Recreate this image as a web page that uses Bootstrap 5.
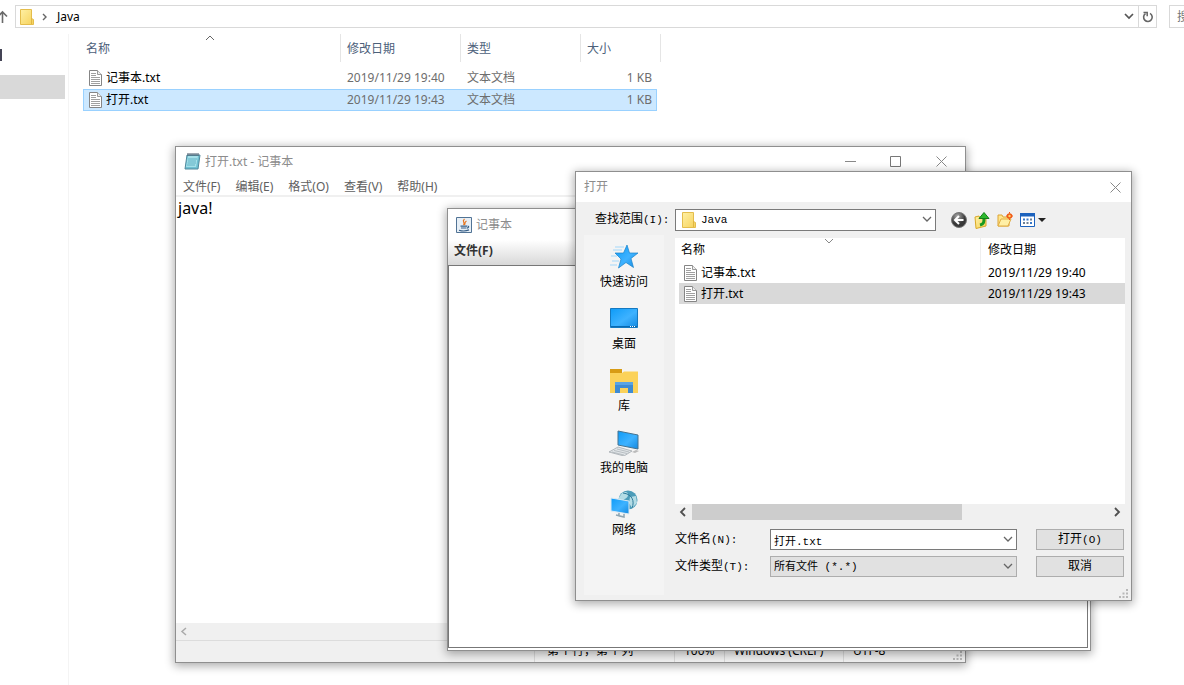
<!DOCTYPE html>
<html lang="zh-CN">
<head>
<meta charset="utf-8">
<meta name="viewport" content="width=device-width, initial-scale=1">
<title>Java</title>
<link href="https://cdn.jsdelivr.net/npm/bootstrap@5.3.0/dist/css/bootstrap.min.css" rel="stylesheet">
<style>
:root{--ui:"Noto Sans","Noto Sans CJK SC",sans-serif;--song:"Liberation Mono","Noto Sans CJK SC",monospace}
body{font:12px/20px var(--ui);color:#000;background:#fff}
button,input,select{font:inherit;color:inherit}
svg{display:block;flex:none}
/* explorer */
.address{height:23px;border:1px solid #d9d9d9}
.address .reload{width:18px;border-left:1px solid #d9d9d9}
.address .crumb{margin-left:9px}
.plain-btn{border:0;background:none;padding:0;display:flex;align-items:center;justify-content:center}
.search-box{width:15px;height:23px;border:1px solid #d9d9d9;border-right:0;padding:0 0 0 7px;border-radius:0;margin-left:12px}
.side-tree{width:69px;border-right:1px solid #f4f4f4}
.side-tree .tree-head{height:12px;width:2px;background:#445;margin-top:15px}
.side-tree .tree-sel{height:24px;width:65px;background:#d9d9d9;margin-top:14px}
.grid-files{border-collapse:separate;border-spacing:0;table-layout:fixed}
.grid-files th,.grid-files td{padding:0;font-weight:400;white-space:nowrap}
.explorer-grid{width:578px;margin-left:14px}
.explorer-grid th{height:28px;color:#4c607a;border-right:1px solid #e5e5e5;padding:2px 0 0 6px}
.explorer-grid th:first-child{padding-left:3px}
.explorer-grid th:nth-child(4){border-right:0}
.explorer-grid th:last-child{padding:0}
.explorer-grid td{height:22px;padding-left:6px;color:#6d6d6d;border-top:1px solid transparent;border-bottom:1px solid transparent}
.explorer-grid td:first-child{color:#000;padding-left:5px;border-left:1px solid transparent}
.explorer-grid td:nth-child(4){border-right:1px solid transparent;padding-right:4px}
.explorer-grid .picked td{background:#cce8ff;border-color:#99d1ff;line-height:18px}
.explorer-grid tbody tr:first-child td{height:27px;padding-top:5px}
.explorer-grid tbody tr:first-child td{line-height:20px}
.sort-mark{position:absolute;left:122px;top:-5px}
.list-pane .sort-mark{left:145px}
/* windows on the desktop */
.win{position:absolute;display:flex;flex-direction:column;border:1px solid #8f8f8f;background:#fff;box-shadow:0 2px 9px 1px rgba(0,0,0,.33)}
.win-title{color:#8c8c8c}
.notepad{left:175px;top:146px;width:791px;height:517px}
.notepad .win-title{height:29px}
.notepad .menus{height:21px;border-bottom:2px solid #f0f0f0;color:#606060;gap:15px;padding-left:7px;line-height:22px}
.notepad a,.javawin a{color:inherit;text-decoration:none}
.notepad textarea{border:0;resize:none;outline:0;font:16px/22px var(--ui);padding:0 2px;min-height:0}
.track{height:17px;background:#f0f0f0}
.status{height:22px;background:#f0f0f0;border-top:1px solid #dcdcdc}
.status span{border-left:1px solid #d8d8d8;padding-left:9px}
.status .s1{width:140px;padding-left:12px}.status .s2{width:50px}.status .s3{width:119px}.status .s4{width:122px}
.javawin{left:447px;top:208px;width:644px;height:443px}
.javawin .win-title{height:31px}
.javawin .menus{height:25px;background:linear-gradient(#fff,#d8d8d8);font-weight:700;color:#333;padding:1px 6px}
.javawin .pane{border:1px solid #777;margin-right:2px;margin-bottom:2px}
.dialog{left:575px;top:171px;width:557px;height:430px;background:#f0f0f0}
.dialog .win-title{height:30px;background:#fff}
.song{font-size:12px;font-family:var(--song)}
.song i{font-style:normal;font-size:11px}
.look-row{height:36px}
.look-row label{width:80px;margin-left:19px}
.look-row .box-wrap{width:261px}
.look-row .tools{margin-left:15px;gap:7px}
.box-wrap{position:relative}
.combo{appearance:none;border:1px solid #7a7a7a;border-radius:0;background:#fff;width:100%;height:21px;padding:0 20px 0 3px;font:11px/18px var(--song);outline:0;display:block}
.combo.grey{background:#e1e1e1;border-color:#adadad}
.look-row .combo{padding-left:25px;height:22px}
.box-wrap svg.arr{position:absolute;right:4px;top:7px;pointer-events:none}
.box-wrap svg.fold{position:absolute;left:7px;top:3px;pointer-events:none}
.places{flex:none;width:80px;background:#f4f4f4;margin:-3px 0 5px 8px;padding-top:7px;gap:13px}
.places button{flex-direction:column;height:49px;justify-content:space-between;line-height:18px;white-space:nowrap}
.list-col{min-width:0;margin:0 6px 0 11px}
.list-pane{height:266px;background:#fff;padding-left:4px}
.list-pane th{height:24px;padding-left:2px}
.list-pane td{height:21px;padding-left:5px;line-height:21px}
.list-pane th:last-child,.list-pane td:last-child{padding-left:7px}
.list-pane th:last-child{border-left:1px solid #eee}
.list-pane td:last-child{border-left:1px solid #f4f4f4}
.list-pane .picked td{background:#d9d9d9;border-color:#d9d9d9}
.list-bar{height:16px;color:#505050;margin-bottom:6px}
.list-bar .thumb{width:270px;background:#cdcdcd}
.field-row{height:27px}
.field-row label{width:95px}
.cmd{width:88px;height:21px;background:#e1e1e1;border:1px solid #adadad;padding:0;line-height:18px;margin:0 1px 0 19px}
.grip{position:absolute;right:3px;bottom:2px}
</style>
</head>
<body class="vh-100 overflow-hidden position-relative">
<svg class="position-absolute" width="0" height="0" aria-hidden="true">
<defs>
<linearGradient id="bl" x1="0" y1="0" x2="1" y2="1"><stop stop-color="#0d9bf8"/><stop offset=".55" stop-color="#3eb2ff"/><stop offset="1" stop-color="#1489e0"/></linearGradient>
<linearGradient id="yl" x1="0" y1="0" x2="1" y2="1"><stop stop-color="#fff0a4"/><stop offset="1" stop-color="#f6d25b"/></linearGradient>
<radialGradient id="gr" cx=".4" cy=".25"><stop stop-color="#aaa"/><stop offset="1" stop-color="#383838"/></radialGradient>
</defs>
<symbol id="doc" viewBox="0 0 13 16"><path d="M.5.5h8l4 4v11H.5z" fill="#fff" stroke="#858585"/><path d="M8.500.5v4h4" fill="#eee" stroke="#999"/><path d="M2 3.500h5M2 5.500h5M2 7.500h9M2 9.500h9M2 11.500h9M2 13.500h9" stroke="#a0a0a0"/></symbol>
<symbol id="folder" viewBox="0 0 14 16"><path d="M.5.5h11v9l2 1v5H.5z" fill="url(#yl)" stroke="#e4bd4c"/><path d="M11.500 9v6" stroke="#e0b744"/></symbol>
<symbol id="down" viewBox="0 0 10 7"><path d="M1 1l4 4 4-4" fill="none" stroke="currentColor" stroke-width="1.300"/></symbol>
<symbol id="cross" viewBox="0 0 11 11"><path d="M.5.5l10 10m0-10l-10 10" stroke="#888" fill="none"/></symbol>
<symbol id="gripdots" viewBox="0 0 9 9"><path d="M7 0h2v2H7zM7 3.500h2v2H7zM7 7h2v2H7zM3.500 3.500h2v2h-2zM3.500 7h2v2h-2zM0 7h2v2H0z" fill="#b8b8b8"/></symbol>
</svg>

<main class="d-flex flex-column h-100">
  <div class="d-flex align-items-center" style="padding-top:5px">
    <button class="plain-btn" aria-label="上移"><svg width="15" height="14" viewBox="0 0 15 14"><path d="M2.500 13V2M-2 6.500L2.500 2 7 6.500" fill="none" stroke="#6a6a6a" stroke-width="1.600"/></svg></button>
    <div class="address d-flex align-items-center flex-grow-1">
      <svg class="ms-1" width="14" height="16"><use href="#folder"/></svg>
      <svg class="ms-2" width="6" height="8" viewBox="0 0 6 8"><path d="M1 1l3 3-3 3" fill="none" stroke="#666" stroke-width="1.400"/></svg>
      <span class="crumb">Java</span>
      <button class="plain-btn ms-auto me-1" aria-label="历史"><svg width="10" height="7" viewBox="0 0 10 7"><path d="M1 1l4 4 4-4" fill="none" stroke="#555" stroke-width="1.700"/></svg></button>
      <button class="plain-btn reload h-100" aria-label="刷新"><svg width="12" height="12" viewBox="0 0 12 12"><path d="M3.500 2.600A4.300 4.300 0 1 0 8 2.400" fill="none" stroke="#666" stroke-width="1.600"/><path d="M1.500 1.500h3.700v3.700" fill="none" stroke="#666" stroke-width="1.500"/></svg></button>
    </div>
    <input class="search-box flex-shrink-0" aria-label="搜索" placeholder="搜索">
  </div>
  <div class="d-flex flex-grow-1" style="padding-top:6px">
    <nav class="side-tree"><div class="tree-head"></div><div class="tree-sel"></div></nav>
    <div>
      <table class="grid-files explorer-grid">
        <colgroup><col style="width:258px"><col style="width:120px"><col style="width:120px"><col style="width:76px"><col style="width:4px"></colgroup>
        <thead><tr><th class="position-relative">名称<svg class="sort-mark" width="10" height="16" viewBox="0 0 10 16"><path d="M1 11l4-4 4 4" fill="none" stroke="#666"/></svg></th><th>修改日期</th><th>类型</th><th>大小</th><th></th></tr></thead>
        <tbody>
        <tr><td><div class="d-flex align-items-center gap-1"><svg width="13" height="16"><use href="#doc"/></svg>记事本.txt</div></td><td>2019/11/29 19:40</td><td>文本文档</td><td class="text-end">1 KB</td></tr>
        <tr class="picked"><td><div class="d-flex align-items-center gap-1"><svg width="13" height="16"><use href="#doc"/></svg>打开.txt</div></td><td>2019/11/29 19:43</td><td>文本文档</td><td class="text-end">1 KB</td></tr>
        </tbody>
      </table>
    </div>
  </div>
</main>

<section class="win notepad">
  <div class="win-title d-flex align-items-center ps-2">
    <svg width="17" height="17" viewBox="0 0 17 17"><path d="M3 2h13l-2 14H1z" fill="#6fc0d2" stroke="#52899c"/><path d="M4 3h10l-2 11H2z" fill="#a5e0e9"/><path d="M4 6h9M4 8h8M3.500 10h8.500M3 12h8" stroke="#62b2c5"/><path d="M4 0v3M6 0v3M8 0v3M10 0v3M12 0v3M14 0v3" stroke="#456"/></svg>
    <span class="ms-1">打开.txt - 记事本</span>
    <button class="plain-btn ms-auto" aria-label="最小化"><svg width="11" height="11"><path d="M0 5.500h11" stroke="#888"/></svg></button>
    <button class="plain-btn" style="margin-left:34px" aria-label="最大化"><svg width="11" height="11"><path d="M.5.5h10v10H.5z" fill="none" stroke="#777"/></svg></button>
    <button class="plain-btn" style="margin:0 18px 0 35px" aria-label="关闭"><svg width="11" height="11"><use href="#cross"/></svg></button>
  </div>
  <nav class="menus d-flex"><a href="#">文件(F)</a><a href="#">编辑(E)</a><a href="#">格式(O)</a><a href="#">查看(V)</a><a href="#">帮助(H)</a></nav>
  <textarea class="flex-grow-1" aria-label="文本" spellcheck="false">java!</textarea>
  <div class="track d-flex align-items-center"><svg width="16" height="9" viewBox="0 0 16 9"><path d="M10 1L6 4.500 10 8" fill="none" stroke="#aaa" stroke-width="1.500"/></svg></div>
  <div class="status d-flex justify-content-end"><span class="s1">第 1 行，第 1 列</span><span class="s2">100%</span><span class="s3">Windows (CRLF)</span><span class="s4">UTF-8</span></div>
  <svg class="grip" width="9" height="9"><use href="#gripdots"/></svg>
</section>

<section class="win javawin">
  <div class="win-title d-flex align-items-center ps-2">
    <svg width="16" height="16" viewBox="0 0 16 16"><path d="M.5.5h15v15H.5z" fill="#e7eff6" stroke="#517395"/><path d="M8.500 2C5 5 10 5 7.500 8M10.500 4C8 5.500 9.500 6.500 8.500 8" fill="none" stroke="#e87722" stroke-width="1.200"/><path d="M4.500 9.200h6.500M5 11h5.500M3 13.200c3 1 7 1 10-.3M11.500 9c2 0 1 2-.5 2.200" fill="none" stroke="#365f88" stroke-width="1.200"/></svg>
    <span class="ms-1">记事本</span>
  </div>
  <nav class="menus"><a href="#">文件(F)</a></nav>
  <div class="pane flex-grow-1"></div>
</section>

<section class="win dialog" role="dialog" aria-label="打开">
  <div class="win-title d-flex align-items-center ps-2"><span>打开</span><button class="plain-btn ms-auto" style="margin-right:10px" aria-label="关闭"><svg width="11" height="11"><use href="#cross"/></svg></button></div>
  <div class="look-row d-flex align-items-center">
    <label class="song" for="look">查找范围<i>(I):</i></label>
    <div class="box-wrap"><select id="look" class="combo"><option>Java</option></select><svg class="fold" width="14" height="16"><use href="#folder"/></svg><svg class="arr" width="10" height="7" color="#666"><use href="#down"/></svg></div>
    <div class="tools d-flex align-items-center">
      <button class="plain-btn" aria-label="后退"><svg width="16" height="16" viewBox="0 0 16 16"><circle cx="8" cy="8" r="7.500" fill="url(#gr)" stroke="#777"/><path d="M12.500 8H4.500M8 4L4 8l4 4" fill="none" stroke="#fff" stroke-width="2"/></svg></button>
      <button class="plain-btn" aria-label="向上"><svg width="16" height="17" viewBox="0 0 16 17"><path d="M1 5l4-1 1 2h6v8L2 16.500z" fill="url(#yl)" stroke="#d8a825"/><path d="M6 13c4-1 4-3 4-7" fill="none" stroke="#189a20" stroke-width="3"/><path d="M5 6.500L10 .5l5 6z" fill="#2db82d" stroke="#128018"/></svg></button>
      <button class="plain-btn" aria-label="新建文件夹"><svg width="16" height="16" viewBox="0 0 16 16"><path d="M1 3h4l1 2h6v9H1z" fill="#ffe68c" stroke="#dda435"/><path d="M1 14l3-7h10l-3 7z" fill="#fff0a6" stroke="#e1ad43"/><circle cx="12.500" cy="4" r="2" fill="#ffd76a" stroke="#f05a16" stroke-width="1.600"/><path d="M12.500 0v1.500M12.500 6.500V8M9 4h1M15 4h1" stroke="#f05a16"/></svg></button>
      <button class="plain-btn" aria-label="视图"><svg width="26" height="14" viewBox="0 0 26 14"><path d="M.5.5h14v13H.5z" fill="#fff" stroke="#1c62bd"/><path d="M0 0h15v3.500H0z" fill="#1c62bd"/><path d="M3 5.500h2v2H3zM6.500 5.500h2v2h-2zM10 9h2v2h-2z" fill="#3978c8"/><path d="M10 5.500h2v2h-2zM3 9h2v2H3zM6.500 9h2v2h-2z" fill="#6c8095"/><path d="M18 5h8l-4 4z" fill="#222"/></svg></button>
    </div>
  </div>
  <div class="d-flex flex-grow-1">
    <div class="places d-flex flex-column">
      <button class="plain-btn"><svg width="28" height="28" viewBox="0 0 28 28"><path d="M17 3l2.500 8H28l-7 5.500 2.500 9L16 20.500 8.500 26 11 17 5 11h8.500z" fill="url(#bl)" stroke="#1a83c9" stroke-width=".7"/><path d="M5 5h9M3 8h9M1 14h6M2 19h7M0 23h7" stroke="#a4d8fa" stroke-width="1.200"/></svg>快速访问</button>
      <button class="plain-btn"><svg width="28" height="28" viewBox="0 0 28 28"><path d="M.5 4.500h27v19H.5z" fill="url(#bl)" stroke="#1479c1"/><path d="M1 22.500h26" stroke="#086ab3"/><path d="M20 22.500h6" stroke="#fff" stroke-dasharray="1 1"/></svg>桌面</button>
      <button class="plain-btn"><svg width="28" height="28" viewBox="0 0 28 28"><path d="M0 3h12v4H0z" fill="#d89c15"/><path d="M0 7h12l2-1.500h14V27H0z" fill="#fbd25a"/><path d="M5 27V16h18v11h-5v-5h-8v5z" fill="#3e8bd3"/><path d="M5 16h18v3H5z" fill="#59a4e4"/></svg>库</button>
      <button class="plain-btn"><svg width="30" height="28" viewBox="0 0 30 28"><path d="M9 3l20 4v14L9 17z" fill="url(#bl)" stroke="#47738f"/><path d="M0 24l9-5 14 4-8 5z" fill="#e1e5e8" stroke="#9ba2a7" stroke-width=".7"/><path d="M3 24l12 3M5 22.500l13 3M8 21l12 3" stroke="#a6adb2" stroke-width=".7"/><path d="M23 24l4-2 3 1-4 2z" fill="#bbb"/></svg>我的电脑</button>
      <button class="plain-btn"><svg width="28" height="28" viewBox="0 0 28 28"><circle cx="18" cy="10" r="9.500" fill="#4c9cb9"/><path d="M12 3c4-2 6-1 6 2s-4 4-6 6l-4-2zM20 7l6-1 1 7-5 5-3-5z" fill="#b4dce5"/><path d="M13 3c9 1 12 8 9 15" fill="none" stroke="#2e7b9b"/><path d="M1 8l18 3v13L1 21z" fill="url(#bl)" stroke="#dceaf3"/><path d="M9 23v3l5 1v-3M6 25l8 2" fill="none" stroke="#8ea5b2" stroke-width="1.500"/></svg>网络</button>
    </div>
    <div class="list-col flex-grow-1">
      <div class="list-pane">
        <table class="grid-files w-100">
          <colgroup><col style="width:301px"><col></colgroup>
          <thead><tr><th class="position-relative">名称<svg class="sort-mark" width="10" height="16" viewBox="0 0 10 16"><path d="M1 6l4 4 4-4" fill="none" stroke="#888"/></svg></th><th>修改日期</th></tr></thead>
          <tbody>
          <tr><td><div class="d-flex align-items-center gap-1"><svg width="13" height="16"><use href="#doc"/></svg>记事本.txt</div></td><td>2019/11/29 19:40</td></tr>
          <tr class="picked"><td><div class="d-flex align-items-center gap-1"><svg width="13" height="16"><use href="#doc"/></svg>打开.txt</div></td><td>2019/11/29 19:43</td></tr>
          </tbody>
        </table>
      </div>
      <div class="list-bar d-flex align-items-center">
        <svg width="17" height="10" viewBox="0 0 17 10"><path d="M10 1L6 5l4 4" fill="none" stroke="currentColor" stroke-width="1.800"/></svg>
        <div class="thumb h-100"></div>
        <svg class="ms-auto" width="17" height="10" viewBox="0 0 17 10"><path d="M7 1l4 4-4 4" fill="none" stroke="currentColor" stroke-width="1.800"/></svg>
      </div>
      <div class="field-row d-flex align-items-center"><label class="song" for="fname">文件名<i>(N):</i></label><div class="box-wrap flex-grow-1"><input id="fname" class="combo" value="打开.txt"><svg class="arr" width="10" height="7" color="#666"><use href="#down"/></svg></div><button class="cmd song">打开<i>(O)</i></button></div>
      <div class="field-row d-flex align-items-center"><label class="song" for="ftype">文件类型<i>(T):</i></label><div class="box-wrap flex-grow-1"><select id="ftype" class="combo grey"><option>所有文件 (*.*)</option></select><svg class="arr" width="10" height="7" color="#666"><use href="#down"/></svg></div><button class="cmd song">取消</button></div>
    </div>
  </div>
  <svg class="grip" width="9" height="9"><use href="#gripdots"/></svg>
</section>
<script src="https://cdn.jsdelivr.net/npm/bootstrap@5.3.0/dist/js/bootstrap.bundle.min.js"></script>
</body>
</html>
